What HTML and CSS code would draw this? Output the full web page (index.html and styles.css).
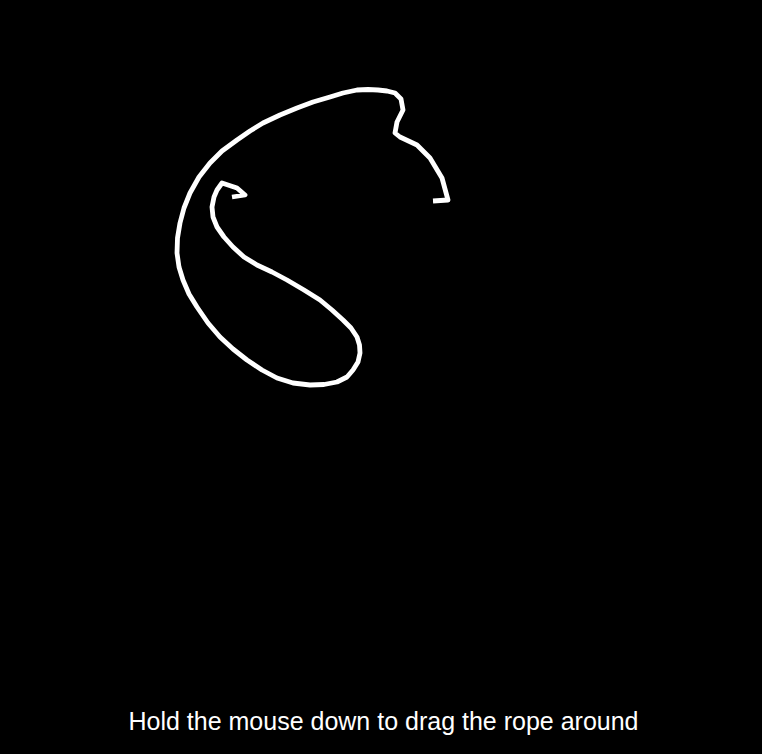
FILE: index.html
```html
<!DOCTYPE html>
<html lang="en">
<head>
<meta charset="utf-8">
<title>Rope</title>
<link rel="stylesheet" href="styles.css">
</head>
<body>
<main class="app">
  <div class="stage">
    <svg class="rope" viewBox="0 0 762 707" width="762" height="707" xmlns="http://www.w3.org/2000/svg">
      <polyline class="rope-line" points="433,201 448,200 442,178 430,158 417,145 400,137 395,133 397,122 403,110 401,99 395,93 387,91 378,90 368,89.5 357,90 343,93 330,97 313,102 297,108 280,115 263,123 250,131 237,140 222,151 210,163 199,177 190,193 184,208 180,223 177.5,238 177,253 179,267 183,280 189,294 197,307 208,323 220,337 233,349 247,360 262,370 277,378 293,383 310,385 324,384.5 337,382 347,377 353,370 358,362 360,353 359.5,345 357,337 351,328 343,320 332,310 320,300 304,290 287,280 272,272 257,265 244,257 233,247 224,237 217,227 213,217 212,207 214,197 217,190 222,183 237,188 245,195 232,197"/>
    </svg>
  </div>
  <p class="caption">Hold the mouse down to drag the rope around</p>
</main>
</body>
</html>
```

FILE: styles.css
```css
html, body {
  margin: 0;
  padding: 0;
  background: #000;
}
.app {
  height: 100vh;
  display: flex;
  flex-direction: column;
  background: #000;
}
.stage {
  flex: 1;
  min-height: 0;
}
.rope {
  display: block;
}
.rope-line {
  fill: none;
  stroke: #fff;
  stroke-width: 4.8;
  stroke-linejoin: round;
  stroke-linecap: butt;
}
.caption {
  margin: 0;
  padding: 0 0 18px 5px;
  color: #fff;
  font-family: "Liberation Sans", Arial, sans-serif;
  font-size: 25px;
  line-height: 29px;
  text-align: center;
}
```
